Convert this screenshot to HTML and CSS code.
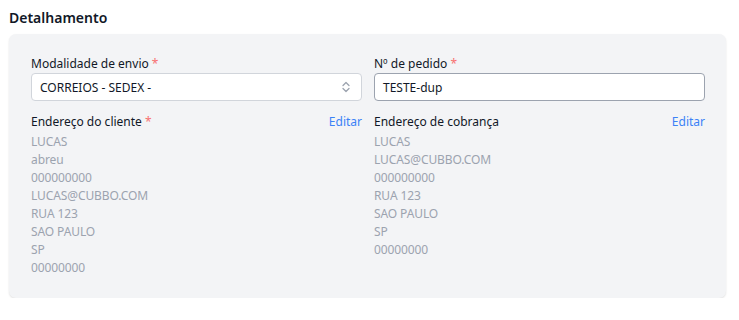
FILE: index.html
```html
<!DOCTYPE html>
<html lang="pt">

<head>
	<meta charset="UTF-8">
	<meta name="viewport" content="width=device-width, initial-scale=1.0">
	<title>Detalhamento</title>
	<link rel="stylesheet" href="styles.css">
</head>

<body>
	<div class="section">
		<h2 class="title">Detalhamento</h2>
		<div class="card">
			<div class="grid">
				<div class="field">
					<label class="label">Modalidade de envio <span class="req">*</span></label>
					<div class="select">
						<span>CORREIOS - SEDEX -</span>
						<svg class="chevron" width="10" height="14" viewBox="0 0 10 14" fill="none" stroke="#9ca3af" stroke-width="1.3" stroke-linecap="round" stroke-linejoin="round">
							<path d="M2 5.5 L5 2.5 L8 5.5" />
							<path d="M2 8.5 L5 11.5 L8 8.5" />
						</svg>
					</div>
				</div>
				<div class="field">
					<label class="label">Nº de pedido <span class="req">*</span></label>
					<div class="input">TESTE-dup</div>
				</div>

				<div class="address">
					<div class="address-head">
						<span class="label">Endereço do cliente <span class="req">*</span></span>
						<a href="#" class="edit">Editar</a>
					</div>
					<div class="lines">
						<div>LUCAS</div>
						<div>abreu</div>
						<div>000000000</div>
						<div>LUCAS@CUBBO.COM</div>
						<div>RUA 123</div>
						<div>SAO PAULO</div>
						<div>SP</div>
						<div>00000000</div>
					</div>
				</div>
				<div class="address">
					<div class="address-head">
						<span class="label">Endereço de cobrança</span>
						<a href="#" class="edit">Editar</a>
					</div>
					<div class="lines">
						<div>LUCAS</div>
						<div>LUCAS@CUBBO.COM</div>
						<div>000000000</div>
						<div>RUA 123</div>
						<div>SAO PAULO</div>
						<div>SP</div>
						<div>00000000</div>
					</div>
				</div>
			</div>
		</div>
	</div>
</body>

</html>
```

FILE: styles.css
```css
:root {
	--text: #111827;
	--muted: #9ca3af;
	--card: #f3f4f6;
	--blue: #3b82f6;
	--red: #f87171;
}

* {
	box-sizing: border-box;
}

body {
	margin: 0;
	padding: 0;
	font-family: 'Noto Sans', sans-serif;
	background: white;
	color: var(--text);
}

.section {
	padding: 9px 13px 0 9px;
}

.title {
	margin: 0 0 7px 0;
	font-size: 14px;
	font-weight: 600;
	line-height: 18px;
}

.card {
	background-color: var(--card);
	border-radius: 7px;
	box-shadow: 0 1px 2px rgba(0, 0, 0, 0.12);
	padding: 22px 21px 21px 22px;
}

.grid {
	display: grid;
	grid-template-columns: 1fr 1fr;
	column-gap: 12px;
	row-gap: 12px;
}

.label {
	display: block;
	font-size: 12px;
	line-height: 16px;
	color: var(--text);
}

.req {
	color: var(--red);
}

.field .label {
	margin-bottom: 1px;
}

.select,
.input {
	display: flex;
	align-items: center;
	justify-content: space-between;
	height: 28px;
	padding: 0 10px 0 8px;
	background-color: white;
	border-radius: 4px;
	font-size: 12px;
}

.select {
	border: 1px solid #d1d5db;
}

.input {
	border: 1px solid #9ca3af;
}

.address-head {
	display: flex;
	justify-content: space-between;
	align-items: center;
	margin-bottom: 3px;
}

.edit {
	font-size: 12px;
	color: var(--blue);
	text-decoration: none;
}

.lines {
	font-size: 12px;
	line-height: 18px;
	color: var(--muted);
	letter-spacing: -0.1px;
}
```
